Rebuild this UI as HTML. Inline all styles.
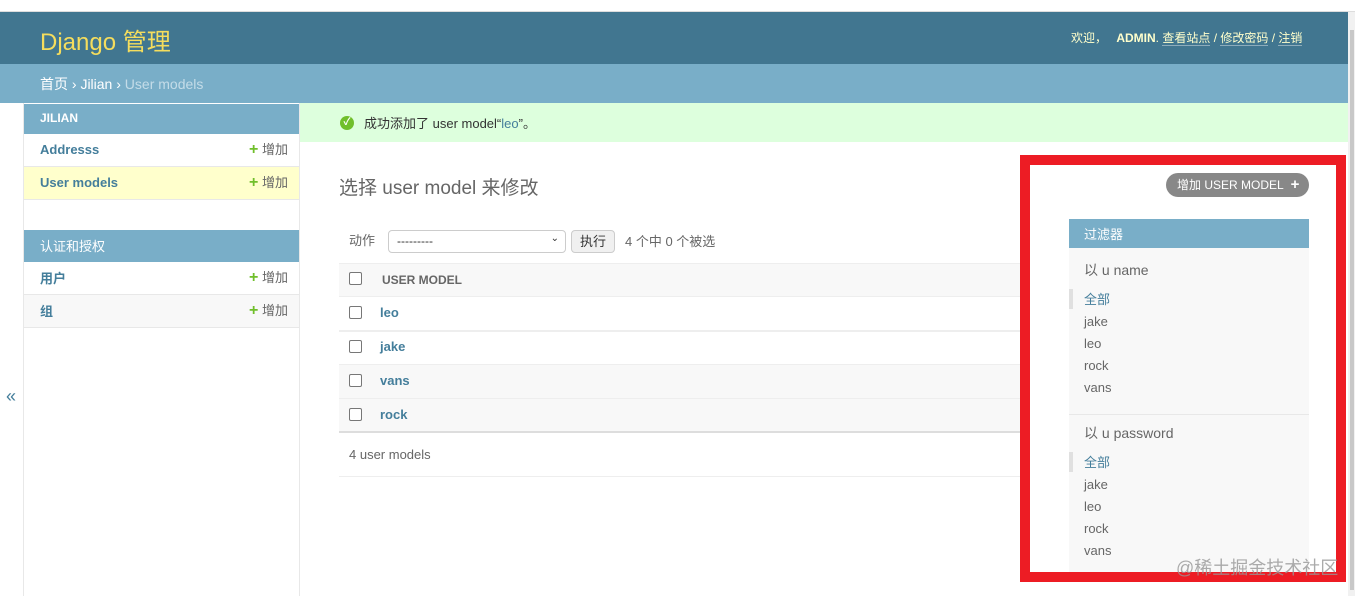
<!DOCTYPE html>
<html><head><meta charset="utf-8">
<style>
*{margin:0;padding:0;box-sizing:border-box}
body{width:1355px;height:596px;overflow:hidden;background:#fff;position:relative;font-family:"Liberation Sans","Noto Sans CJK SC",sans-serif;font-size:13px;color:#333}
.a{position:absolute;white-space:nowrap}
.plus{color:#70bf2b;font-weight:bold;font-size:16px}
.add{color:#666;font-size:13px}
</style></head><body>
<div class="a" style="left:0;top:0;width:1355px;height:12px;background:#fff;border-bottom:1px solid #ddd"></div>
<div class="a" style="left:0;top:12px;width:1348px;height:52px;background:#417690"></div>
<div class="a" style="left:40px;top:22px;font-size:24px;color:#f5dd5d">Django 管理</div>
<div class="a" style="left:1071px;top:29px;font-size:12px;color:#ffc">欢迎， <b style="margin-left:6px">ADMIN</b>. <span style="border-bottom:1px solid rgba(255,255,255,.4)">查看站点</span> / <span style="border-bottom:1px solid rgba(255,255,255,.4)">修改密码</span> / <span style="border-bottom:1px solid rgba(255,255,255,.4)">注销</span></div>
<div class="a" style="left:0;top:64px;width:1348px;height:39px;background:#79aec8"></div>
<div class="a" style="left:40px;top:74px;font-size:14px;color:#fff">首页 › Jilian › <span style="color:#c4dce8">User models</span></div>

<div class="a" style="left:23px;top:103px;width:277px;height:493px;border-left:1px solid #e8e8e8;border-right:1px solid #e8e8e8"></div>
<div class="a" style="left:24px;top:104px;width:275px;height:30px;background:#79aec8"></div>
<div class="a" style="left:40px;top:111px;font-size:12px;color:#fff;font-weight:bold">JILIAN</div>
<div class="a" style="left:24px;top:134px;width:275px;height:33px;border-bottom:1px solid #e8e8e8"></div>
<div class="a" style="left:40px;top:142px;color:#447e9b;font-weight:bold">Addresss</div>
<div class="a" style="left:249px;top:139px"><span class="plus">+</span> <span class="add">增加</span></div>
<div class="a" style="left:24px;top:167px;width:275px;height:33px;background:#ffffcc;border-bottom:1px solid #e8e8e8"></div>
<div class="a" style="left:40px;top:175px;color:#447e9b;font-weight:bold">User models</div>
<div class="a" style="left:249px;top:172px"><span class="plus">+</span> <span class="add">增加</span></div>
<div class="a" style="left:24px;top:230px;width:275px;height:32px;background:#79aec8"></div>
<div class="a" style="left:40px;top:236px;font-size:13px;color:#fff">认证和授权</div>
<div class="a" style="left:24px;top:262px;width:275px;height:33px;border-bottom:1px solid #e8e8e8"></div>
<div class="a" style="left:40px;top:268px;color:#447e9b;font-weight:bold">用户</div>
<div class="a" style="left:249px;top:267px"><span class="plus">+</span> <span class="add">增加</span></div>
<div class="a" style="left:24px;top:295px;width:275px;height:33px;background:#f8f8f8;border-bottom:1px solid #e8e8e8"></div>
<div class="a" style="left:40px;top:301px;color:#447e9b;font-weight:bold">组</div>
<div class="a" style="left:249px;top:300px"><span class="plus">+</span> <span class="add">增加</span></div>
<div class="a" style="left:6px;top:386px;font-size:18px;color:#447e9b">«</div>

<div class="a" style="left:300px;top:103px;width:1048px;height:39px;background:#dfd"></div>
<div class="a" style="left:340px;top:116px;width:14px;height:14px;border-radius:50%;background:#70bf2b;color:#fff;font-size:10px;line-height:14px;text-align:center;font-weight:bold">✓</div>
<div class="a" style="left:364px;top:113px;font-size:13px;color:#333">成功添加了 user model“<span style="color:#447e9b">leo</span>”。</div>
<div class="a" style="left:339px;top:173px;font-size:19px;color:#666">选择 user model 来修改</div>

<div class="a" style="left:349px;top:230px;font-size:13px;color:#666">动作</div>
<div class="a" style="left:388px;top:230px;width:178px;height:23px;border:1px solid #ccc;border-radius:4px;background:#fff;font-size:12px;padding:3px 8px">---------<span style="position:absolute;right:6px;top:2px;font-size:10px">⌄</span></div>
<div class="a" style="left:571px;top:230px;width:44px;height:23px;border:1px solid #ccc;border-radius:4px;background:#f0f0f0;font-size:13px;text-align:center;line-height:21px">执行</div>
<div class="a" style="left:625px;top:231px;font-size:13px;color:#666">4 个中 0 个被选</div>

<div class="a" style="left:339px;top:263px;width:700px;height:34px;background:#f8f8f8;border-top:1px solid #eee;border-bottom:1px solid #eee"></div>
<div class="a" style="left:382px;top:273px;font-size:12px;font-weight:bold;color:#666">USER MODEL</div>
<div class="a" style="left:339px;top:331px;width:700px;height:34px;border-top:1px solid #eee;border-bottom:1px solid #eee"></div>
<div class="a" style="left:339px;top:398px;width:700px;height:35px;background:#f8f8f8;border-top:1px solid #eee;border-bottom:2px solid #ddd"></div>
<div class="a" style="left:339px;top:297px;width:700px;height:34px;border-bottom:1px solid #eee"></div>
<div class="a" style="left:339px;top:365px;width:700px;height:33px;background:#f8f8f8"></div>
<div class="a" style="left:349px;top:272px;width:13px;height:13px;border:1px solid #777;border-radius:2px;background:#fff"></div>
<div class="a" style="left:349px;top:306px;width:13px;height:13px;border:1px solid #777;border-radius:2px;background:#fff"></div>
<div class="a" style="left:349px;top:340px;width:13px;height:13px;border:1px solid #777;border-radius:2px;background:#fff"></div>
<div class="a" style="left:349px;top:374px;width:13px;height:13px;border:1px solid #777;border-radius:2px;background:#fff"></div>
<div class="a" style="left:349px;top:408px;width:13px;height:13px;border:1px solid #777;border-radius:2px;background:#fff"></div>
<div class="a" style="left:380px;top:305px;color:#447e9b;font-weight:bold">leo</div>
<div class="a" style="left:380px;top:339px;color:#447e9b;font-weight:bold">jake</div>
<div class="a" style="left:380px;top:373px;color:#447e9b;font-weight:bold">vans</div>
<div class="a" style="left:380px;top:407px;color:#447e9b;font-weight:bold">rock</div>
<div class="a" style="left:349px;top:447px;color:#666">4 user models</div>
<div class="a" style="left:339px;top:476px;width:700px;height:1px;background:#eee"></div>

<div class="a" style="left:1020px;top:155px;width:326px;height:427px;border:10px solid #ed1c24;background:#fff"></div>
<div class="a" style="left:1166px;top:173px;width:143px;height:24px;border-radius:12px;background:#888;color:#fff;font-size:12px;line-height:24px;padding-left:11px">增加 USER MODEL <b style="margin-left:4px;font-size:15px">+</b></div>
<div class="a" style="left:1069px;top:219px;width:240px;height:29px;background:#79aec8;color:#fff;font-size:13px;padding:5px 15px">过滤器</div>
<div class="a" style="left:1069px;top:248px;width:240px;height:324px;background:#f8f8f8"></div>
<div class="a" style="left:1069px;top:414px;width:240px;height:1px;background:#e8e8e8"></div>
<div class="a" style="left:1084px;top:260px;font-size:14px;color:#666">以 u name</div>
<div class="a" style="left:1069px;top:289px;width:4px;height:20px;background:#e0e0e0"></div>
<div class="a" style="left:1084px;top:289px;color:#447e9b">全部</div>
<div class="a" style="left:1084px;top:314px;color:#666">jake</div>
<div class="a" style="left:1084px;top:336px;color:#666">leo</div>
<div class="a" style="left:1084px;top:358px;color:#666">rock</div>
<div class="a" style="left:1084px;top:380px;color:#666">vans</div>
<div class="a" style="left:1084px;top:423px;font-size:14px;color:#666">以 u password</div>
<div class="a" style="left:1069px;top:452px;width:4px;height:20px;background:#e0e0e0"></div>
<div class="a" style="left:1084px;top:452px;color:#447e9b">全部</div>
<div class="a" style="left:1084px;top:477px;color:#666">jake</div>
<div class="a" style="left:1084px;top:499px;color:#666">leo</div>
<div class="a" style="left:1084px;top:521px;color:#666">rock</div>
<div class="a" style="left:1084px;top:543px;color:#666">vans</div>
<div class="a" style="left:1176px;top:554px;font-size:18px;color:rgba(150,150,150,.8)">@稀土掘金技术社区</div>
<div class="a" style="left:1348px;top:12px;width:7px;height:584px;background:#f1f1f1"></div>
<div class="a" style="left:1350px;top:30px;width:4px;height:560px;background:#c8c8c8"></div>
</body></html>
